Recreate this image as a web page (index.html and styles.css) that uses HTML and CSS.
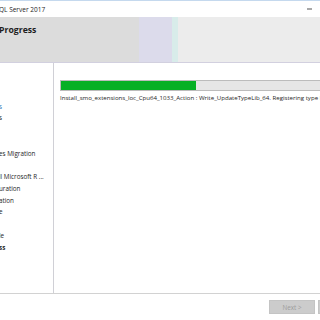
FILE: index.html
```html
<!DOCTYPE html>
<html>
<head>
    <title>SQL Server 2017 Setup</title>
    <link rel="stylesheet" href="styles.css">
</head>
<body>

<div class="window">
    <div class="titlebar">
        <div class="title">QL Server 2017</div>
        <div class="minimize"></div>
    </div>

    <div class="header">
        <div class="header-main">Progress</div>
        <div class="header-lav"></div>
        <div class="header-cyan"></div>
        <div class="header-rest"></div>
    </div>

    <div class="main">
        <div class="steps">
            <div class="step"></div>
            <div class="step"></div>
            <div class="step done">s</div>
            <div class="step">s</div>
            <div class="step"></div>
            <div class="step"></div>
            <div class="step">es Migration</div>
            <div class="step"></div>
            <div class="step">ll Microsoft R ...</div>
            <div class="step">uration</div>
            <div class="step">ation</div>
            <div class="step">e</div>
            <div class="step"></div>
            <div class="step">le</div>
            <div class="step current">ss</div>
        </div>
        <div class="content">
            <div class="progress">
                <div class="progress-fill"></div>
            </div>
            <div class="status">Install_smo_extensions_loc_Cpu64_1033_Action : Write_UpdateTypeLib_64. Registering type l</div>
        </div>
    </div>

    <div class="footer">
        <button class="button" disabled>Next &gt;</button>
        <button class="button" disabled>Cancel</button>
    </div>
</div>

</body>
</html>
```

FILE: styles.css
```css
body {
    margin: 0;
    background-color: #fff;
    font-family: "Open Sans", "Noto Sans", sans-serif;
    color: #1e1e1e;
}
.window {
    width: 320px;
    height: 320px;
    overflow: hidden;
    display: flex;
    flex-direction: column;
}
.titlebar {
    height: 16px;
    border-top: 1px solid #c5d9ee;
    display: flex;
    align-items: center;
    justify-content: space-between;
}
.title {
    font-size: 6.5px;
    margin-left: -1px;
    margin-top: 1px;
}
.minimize {
    width: 5px;
    height: 2px;
    background-color: #a8a8a8;
    margin-right: 8px;
}
.header {
    height: 45px;
    display: flex;
    border-bottom: 1px solid #d2d0df;
}
.header-main {
    width: 140px;
    background-color: #dcdcdc;
    font-weight: bold;
    font-size: 8.7px;
    padding-top: 7px;
    margin-left: -1px;
    box-sizing: border-box;
}
.header-lav {
    width: 33px;
    background-color: #dcdbeb;
}
.header-cyan {
    width: 6px;
    background-color: #d8ecea;
}
.header-rest {
    flex: 1;
    background-color: #ececec;
}
.main {
    height: 230px;
    display: flex;
    border-bottom: 1px solid #d2d2d2;
}
.steps {
    width: 54px;
    border-right: 1px solid #d0d0d6;
    padding-top: 14px;
    box-sizing: border-box;
    flex-shrink: 0;
}
.step {
    height: 11.75px;
    line-height: 11.75px;
    font-size: 6.3px;
    white-space: nowrap;
    overflow: hidden;
    margin-left: -1px;
}
.step.done {
    color: #3a78b8;
}
.step.current {
    font-weight: bold;
}
.content {
    flex: 1;
    padding: 17px 0 0 6px;
    overflow: hidden;
}
.progress {
    height: 9px;
    border: 1px solid #bcbcbc;
    background-color: #e6e6e6;
    margin-right: -20px;
}
.progress-fill {
    width: 135px;
    height: 100%;
    background-color: #06b025;
}
.status {
    font-size: 6.1px;
    white-space: nowrap;
    margin-top: 2px;
}
.footer {
    flex: 1;
    display: flex;
    align-items: flex-start;
    padding: 6px 0 0 269px;
    gap: 3px;
}
.button {
    width: 46px;
    height: 14px;
    flex-shrink: 0;
    font-family: "Open Sans", sans-serif;
    font-size: 6.3px;
    background-color: #cccccc;
    color: #9c9c9c;
    border: 1px solid #c4c4c4;
    padding: 0;
}
```
